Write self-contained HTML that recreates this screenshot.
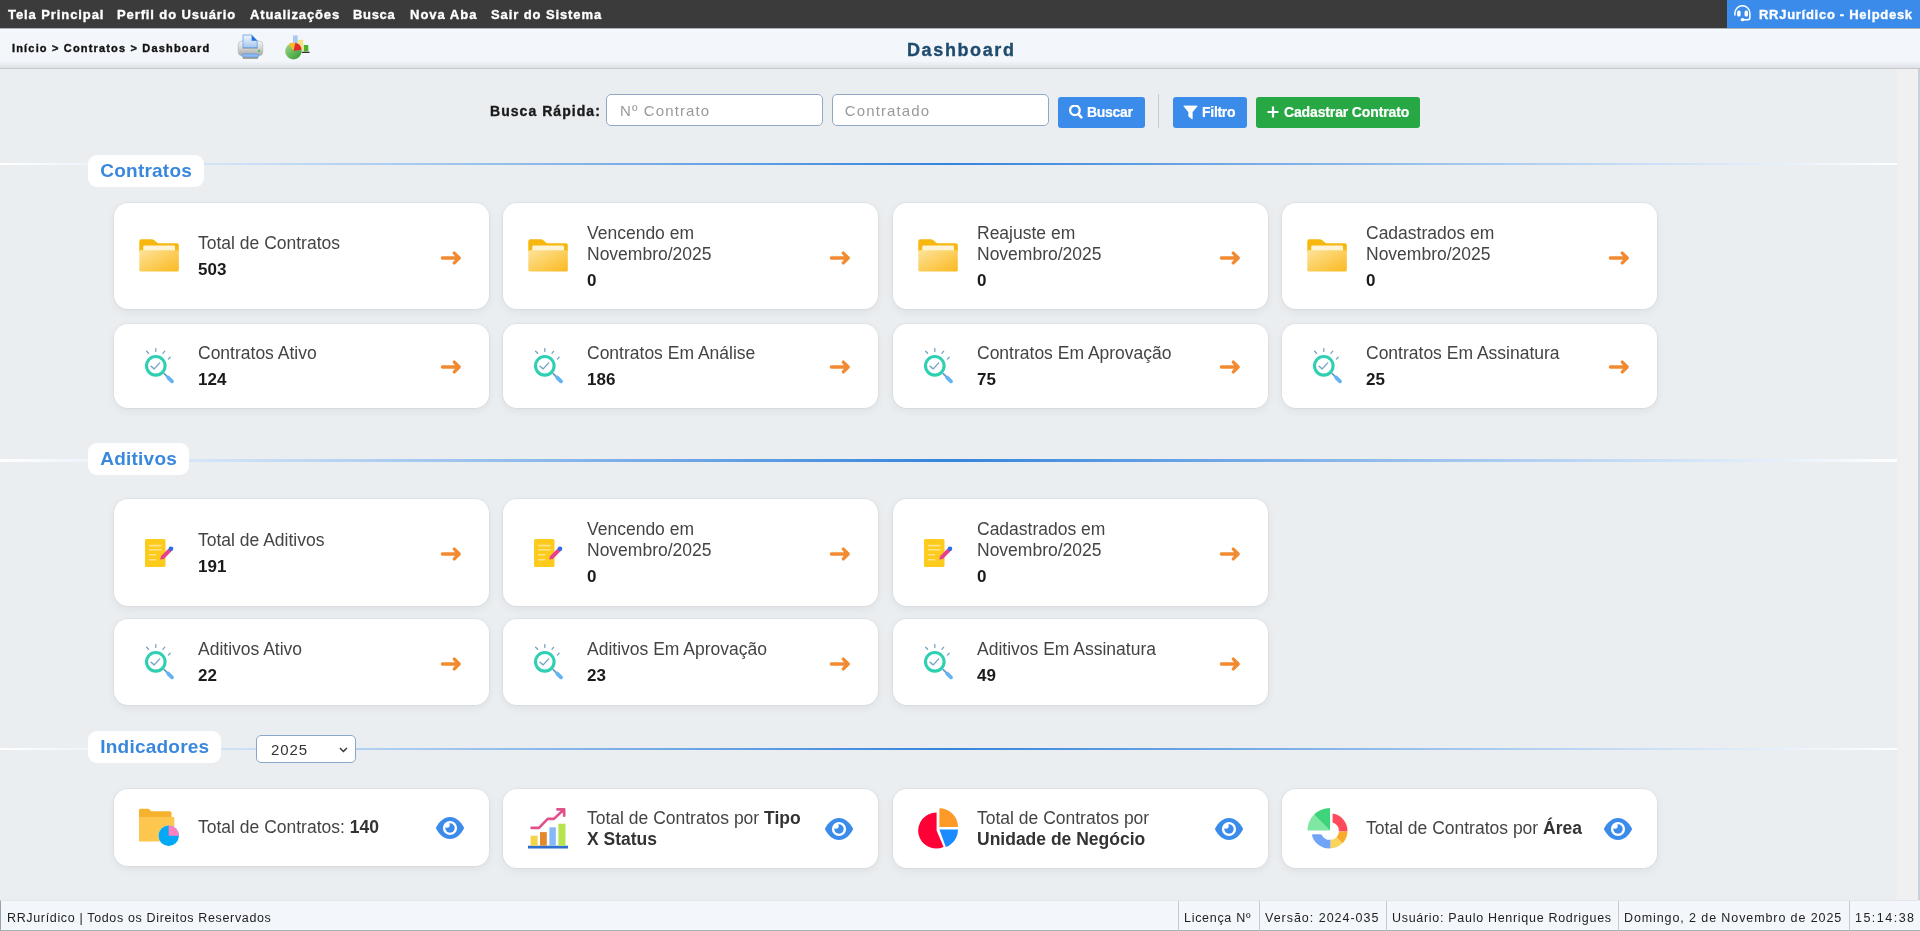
<!DOCTYPE html>
<html lang="pt-BR">
<head>
<meta charset="utf-8">
<title>Dashboard</title>
<style>
*{box-sizing:border-box;margin:0;padding:0}
html,body{width:1920px;height:931px;overflow:hidden}
body{-webkit-font-smoothing:antialiased;position:relative;background:#ebeef1;font-family:"Liberation Sans",sans-serif;color:#333}
.abs{position:absolute;white-space:nowrap}
#top .m,#help .t,#crumb .bc,#crumb .ttl,.lbl,.inp,.btn .bt,.sec,.card .tx,.card .tx2,.sel span,#foot .f{will-change:transform}
.vb{-webkit-text-stroke:.35px currentColor}
/* top bar */
#top{position:absolute;left:0;top:0;width:1920px;height:28px;background:#3b3b3b}
#top .m{position:absolute;top:7px;font-weight:bold;font-size:13px;line-height:15px;color:#fff;letter-spacing:.72px}
#help{position:absolute;left:1727px;top:0;width:193px;height:28px;background:#3a8bea}
#help .t{position:absolute;left:32px;top:7px;font-weight:bold;font-size:13px;line-height:15px;color:#fff;letter-spacing:.72px}
/* breadcrumb bar */
#crumb{position:absolute;left:0;top:28px;width:1920px;height:41px;background:linear-gradient(#a9b3bd 0,#a9b3bd 1px,#fbfcfe 1px,#f3f6fa 3px,#f3f6fa 33px,#dfe2e6 39.5px,#c5c9ce 40px,#c5c9ce 41px)}
#crumb .bc{position:absolute;left:11.8px;top:14px;font-weight:bold;font-size:11px;line-height:13px;color:#111;letter-spacing:1.17px}
#crumb .ttl{position:absolute;left:907.3px;top:12px;font-weight:bold;font-size:18px;line-height:20px;color:#1f4b6e;letter-spacing:1.62px}
/* scrollbar strip */
#sb{position:absolute;left:1897px;top:69px;width:21px;height:832px;background:#f0f0f0}
#sbb{position:absolute;left:1918px;top:69px;width:2px;height:862px;background:#c8d0d8}
/* search */
.lbl{position:absolute;left:490.3px;top:103px;font-weight:bold;font-size:14px;line-height:16px;color:#1a1a1a;letter-spacing:1.05px}
.inp{position:absolute;top:94px;height:32px;background:#fff;border:1px solid #8fa9c6;border-radius:5px;font-size:15px;color:#9a9a9a;padding:8px 0 0 13px;line-height:16px;letter-spacing:1.12px}
.btn{position:absolute;top:97px;height:31px;border-radius:3px;color:#fff;font-weight:bold;font-size:14px;line-height:16px}
.btn .bt{position:absolute;top:7px;letter-spacing:-.28px;-webkit-text-stroke:.2px currentColor}
.sep{position:absolute;left:1158px;top:94px;width:1px;height:34px;background:#c8ccd0}
/* sections */
.hline{position:absolute;left:0;width:1897px;height:2px;background:linear-gradient(90deg,#fff 0%,#3584dc 50%,#fff 100%)}
.sec{position:absolute;left:88px;height:32px;background:#fff;border-radius:9px;color:#3a88dd;font-weight:bold;font-size:19px;line-height:22px;padding:5px 0 0 12.3px;letter-spacing:.22px}
/* cards */
.card{position:absolute;width:375px;background:#fff;border-radius:14px;box-shadow:0 0 0 1px rgba(0,0,0,.035),0 3px 10px rgba(0,0,0,.06)}
.card .ic{position:absolute}
.card .tx{position:absolute;left:83.5px;font-size:17.5px;line-height:21px;color:#444;white-space:nowrap}
.card .tx b{display:block;margin-top:5px;color:#1b1b1b;font-size:17px}
.card .ar{position:absolute}
.card .tx2{position:absolute;left:84px;font-size:17.5px;line-height:21px;color:#444;white-space:nowrap}
.card .tx2 b{color:#333}
.card .ey{position:absolute}
.sel{position:absolute;left:256px;top:735px;width:100px;height:28px;background:#fff;border:1px solid #89a7c8;border-radius:5px;font-size:15px;color:#333}
.sel span{position:absolute;left:14px;top:6px;line-height:16px;letter-spacing:.9px}
/* footer */
#foot{position:absolute;left:0;top:900px;width:1920px;height:31px;background:#f3f6fa;border-top:1px solid #e2e6ea;border-left:1px solid #9aa3ab;border-bottom:1px solid #a8b0b8}
#foot .f{position:absolute;top:9.5px;font-size:12.5px;line-height:14px;color:#222;letter-spacing:.6px}
#foot .s{position:absolute;top:0;width:1px;height:30px;background:#c6cbd0}
</style>
</head>
<body>
<svg width="0" height="0" style="position:absolute">
<defs>
 <linearGradient id="gF" x1="0" y1="0" x2="1" y2="1">
  <stop offset="0" stop-color="#fde39a"/><stop offset="1" stop-color="#fbb91f"/>
 </linearGradient>
 <symbol id="folder" viewBox="0 0 40 40">
  <path d="M0.3,5.2 Q0.3,3.2 2.3,3.2 H12.8 Q14,3.2 15,4 L18,6.6 Q18.6,7.2 19.6,7.2 H38 Q39.8,7.2 39.8,9 V16 H0.3 Z" fill="#f6b70e"/>
  <rect x="4.2" y="9.6" width="31.8" height="6" rx="1.2" fill="#fff3d6"/>
  <path d="M0.3,14.2 H39.8 V34 Q39.8,35.5 38.3,35.5 H1.8 Q0.3,35.5 0.3,34 Z" fill="url(#gF)"/>
 </symbol>
 <symbol id="srch" viewBox="0 0 40 40">
  <g fill="none" stroke-linecap="round">
   <circle cx="16.8" cy="19.8" r="9.3" stroke="#2fd0b2" stroke-width="3.1"/>
   <path d="M12,20.2 L15.2,22.9 L20.7,16.9" stroke="#76a2c6" stroke-width="1.4" stroke-linejoin="round"/>
   <path d="M25.2,27.7 L28.6,31" stroke="#6f9cc4" stroke-width="1.8"/>
   <path d="M29.2,31.6 L33,35.3" stroke="#63b2f6" stroke-width="3.8"/>
   <path d="M7.6,5.2 L9.6,7.3 M16.8,2.6 V5.4 M25.7,5.2 L23.9,7.3 M31.2,11.3 L29.4,13.1" stroke="#76a2c6" stroke-width="1.3"/>
  </g>
 </symbol>
 <symbol id="doc" viewBox="0 0 40 40">
  <rect x="6" y="6" width="20.5" height="28" rx="1.6" fill="#fccb1b"/>
  <path d="M10.6,12.6 H22 M10.6,16.8 H22 M10.6,21.8 H16.6 M10.6,26.8 H16.6" stroke="#fde38c" stroke-width="1.6" stroke-linecap="round"/>
  <path d="M21.2,26.4 L22.1,23.1 L30.4,14.8 L33.2,17.6 L24.9,25.9 Z" fill="#e8418b"/>
  <circle cx="32" cy="15.8" r="2.3" fill="#2c6ce8"/>
 </symbol>
 <symbol id="arr" viewBox="0 0 24 16">
  <path d="M3.4,8 H20.2 M15.3,3.1 L20.2,8 L15.3,12.9" fill="none" stroke="#f28a31" stroke-width="3.3" stroke-linecap="round" stroke-linejoin="round"/>
 </symbol>
 <symbol id="eye" viewBox="0 0 30 24">
  <clipPath id="cpP"><circle cx="15" cy="12" r="6.4"/></clipPath>
  <path d="M0.8,12 C4.5,5 9,1 15,1 C21,1 25.5,5 29.2,12 C25.5,19 21,23 15,23 C9,23 4.5,19 0.8,12 Z" fill="#3b8beb"/>
  <circle cx="15" cy="12" r="7.1" fill="#fff"/>
  <circle cx="15" cy="12" r="4.7" fill="#3b8beb"/>
  <circle cx="12" cy="9" r="2.7" fill="#fff" clip-path="url(#cpP)"/>
 </symbol>
 <symbol id="ifold" viewBox="0 0 40 40">
  <path d="M0,2.2 Q0,0.7 1.5,0.7 H9.7 L12.2,3.2 H31 Q32.5,3.2 32.5,4.7 V12 H0 Z" fill="#f6b22c"/>
  <path d="M0,9 H35.3 V33.4 H0 Z" fill="#fdc74f"/>
  <circle cx="29.7" cy="27.8" r="10.2" fill="#fff"/>
  <circle cx="29.7" cy="27.8" r="10.2" fill="#03a9f4"/>
  <path d="M29.7,27.8 V17.6 A10.2,10.2 0 0 1 39.9,27.8 Z" fill="#ff80c0"/>
 </symbol>
 <symbol id="ichart" viewBox="0 0 40 42">
  <rect x="0" y="37.7" width="40" height="2.8" fill="#2f6fd0"/>
  <rect x="2.6" y="27.7" width="7.1" height="10" fill="#f3d44a"/>
  <rect x="12" y="24.1" width="6.8" height="13.6" fill="#e38a2c"/>
  <rect x="21.4" y="19.3" width="6.4" height="18.4" fill="#86b8f8"/>
  <rect x="30.4" y="15.7" width="7.1" height="22" fill="#b6e44e"/>
  <path d="M3.6,19.9 H11 L19.7,10.9 H25.9 L35.6,1.8 M29.4,1.4 H36.2 V7.7" fill="none" stroke="#e2508c" stroke-width="2.6" stroke-linecap="round" stroke-linejoin="round"/>
 </symbol>
 <symbol id="ipie" viewBox="0 0 40 42">
  <path d="M18.6,22.6 V4.6 A18,18 0 1 0 25.6,39 Z" fill="#ff0036"/>
  <path d="M21.4,18.9 V0.3 A18.6,18.6 0 0 1 40,18.9 Z" fill="#ff9a28"/>
  <path d="M21.4,21.5 H40 A18.6,18.6 0 0 1 27.8,39 Z" fill="#1a8cff"/>
 </symbol>
 <symbol id="idonut" viewBox="0 0 46 42">
  <path d="M23,22.5 H0.5 A22.5,22.5 0 0 1 7.1,6.6 Z" fill="#7ee8a2"/>
  <path d="M23,22.5 L7.1,6.6 A22.5,22.5 0 0 1 23,0 Z" fill="#3dd47a"/>
  <path d="M25.6,5.6 A17.3,17.3 0 0 1 40.5,23.4 H32 A8.5,8.5 0 0 0 25.6,14.6 Z" fill="#ff4a5c"/>
  <path d="M40.5,23.4 A17.3,17.3 0 0 1 35.4,35.2 L29.4,29.2 A8.5,8.5 0 0 0 32,23.4 Z" fill="#f9ac2b"/>
  <path d="M35.4,35.2 A17.3,17.3 0 0 1 23.4,40.3 V31.8 A8.5,8.5 0 0 0 29.4,29.2 Z" fill="#fad45b"/>
  <path d="M23.4,40.3 A17.3,17.3 0 0 1 5,27.6 Q4.8,26.2 6.4,26.2 H13 Q14.4,26.2 15.2,27.4 A8.5,8.5 0 0 0 23.4,31.8 Z" fill="#71a4f7"/>
 </symbol>
</defs>
</svg>
<div id="top">
  <span class="m vb" style="left:8px;letter-spacing:.91px">Tela Principal</span>
  <span class="m vb" style="left:117.3px;letter-spacing:.89px">Perfil do Usuário</span>
  <span class="m vb" style="left:250px;letter-spacing:.88px">Atualizações</span>
  <span class="m vb" style="left:353.2px;letter-spacing:.67px">Busca</span>
  <span class="m vb" style="left:409.8px;letter-spacing:.99px">Nova Aba</span>
  <span class="m vb" style="left:491.2px;letter-spacing:.9px">Sair do Sistema</span>
</div>
<div id="help">
  <svg style="position:absolute;left:6px;top:4px" width="24" height="20" viewBox="0 0 24 20">
   <path d="M1.9,11 V9.3 A7.5,7.5 0 0 1 16.9,9.3 V13.6 Q16.9,15.7 14.8,15.7 H10.6" fill="none" stroke="#fff" stroke-width="1.5" stroke-linecap="round"/>
   <rect x="4.1" y="6.6" width="3.5" height="6" rx="1.5" fill="#fff"/>
   <rect x="11.5" y="6.6" width="3.5" height="6" rx="1.5" fill="#fff"/>
   <ellipse cx="9.6" cy="15.7" rx="2" ry="1.6" fill="#fff"/>
  </svg>
  <span class="t vb">RRJurídico - Helpdesk</span>
</div>
<div id="crumb">
  <span class="bc vb">Início &gt; Contratos &gt; Dashboard</span>
  <span class="ttl vb">Dashboard</span>
  <svg style="position:absolute;left:237px;top:6px" width="27" height="26" viewBox="0 0 27 26">
   <defs>
    <linearGradient id="gPr" x1="0" y1="0" x2="0" y2="1"><stop offset="0" stop-color="#f6f6f6"/><stop offset=".5" stop-color="#d2d2d2"/><stop offset="1" stop-color="#a8a8a8"/></linearGradient>
    <linearGradient id="gPp" x1="0" y1="0" x2="0" y2="1"><stop offset="0" stop-color="#f2f7fd"/><stop offset="1" stop-color="#a6c7ee"/></linearGradient>
   </defs>
   <rect x="1.2" y="7" width="24.6" height="14.8" rx="3.8" fill="url(#gPr)" stroke="#b4b4b4" stroke-width=".6"/>
   <rect x="5.6" y="13.6" width="15.2" height="1" fill="#9a9a9a"/>
   <path d="M6,1 H14.6 L20.2,6.8 V13.6 H6 Z" fill="url(#gPp)" stroke="#5d9ce6" stroke-width=".8"/>
   <path d="M14.6,1 L20.2,6.8 H14.6 Z" fill="#1f6fd8"/>
   <rect x="5.2" y="19.9" width="16.4" height="3.3" rx="1" fill="#8cbcf4" stroke="#4c8fe0" stroke-width=".6"/>
   <rect x="5.6" y="23.2" width="15.6" height="1.6" rx=".8" fill="#8a8a8a"/>
   <circle cx="22.1" cy="16.9" r="1.1" fill="#3fc43f"/>
  </svg>
  <svg style="position:absolute;left:284px;top:7px" width="27" height="26" viewBox="0 0 27 26">
   <defs>
    <linearGradient id="gPg" x1="0" y1="0" x2="1" y2="1"><stop offset="0" stop-color="#a8d890"/><stop offset="1" stop-color="#2a9a2a"/></linearGradient>
   </defs>
   <rect x="9" y="0.4" width="4.7" height="8.6" fill="#a9c8f4"/>
   <rect x="14.2" y="4.8" width="4.9" height="11.2" fill="#f4e27a"/>
   <rect x="19.8" y="10" width="4.5" height="6.5" fill="#4fb02a"/>
   <rect x="17.7" y="16.8" width="8" height="1.2" rx=".6" fill="#333"/>
   <circle cx="9.4" cy="16.2" r="8.2" fill="url(#gPg)"/>
   <path d="M9.6,16 L4.6,9.2 A8.2,8.2 0 0 1 11.4,7.8 Z" fill="#f9b92a"/>
   <path d="M9.6,16 L11.4,7.8 A8.2,8.2 0 0 1 17.6,14.6 Z" fill="#e32b2b"/>
  </svg>
</div>
<div id="sb"></div><div id="sbb"></div>

<!-- SEARCH -->
<span class="lbl vb">Busca Rápida:</span>
<div class="inp" style="left:606px;width:217px">Nº Contrato</div>
<div class="inp" style="left:832px;width:217px;padding-left:11.8px">Contratado</div>
<div class="btn" style="left:1058px;width:87px;background:#3b8beb"><svg style="position:absolute;left:11px;top:8px" width="15" height="15" viewBox="0 0 15 15"><circle cx="5.9" cy="5.3" r="4.8" fill="none" stroke="#fff" stroke-width="2.3"/><path d="M9.4,9.2 L12.4,12.3" stroke="#fff" stroke-width="2.6" stroke-linecap="round"/></svg><span class="bt" style="left:29px">Buscar</span></div>
<div class="sep"></div>
<div class="btn" style="left:1173px;width:74px;background:#3b8beb"><svg style="position:absolute;left:10px;top:8px" width="15" height="15" viewBox="0 0 15 15"><path d="M0.8,1 H14.2 L9.2,7.2 V14 L5.8,11.4 V7.2 Z" fill="#fff" stroke="#fff" stroke-width=".8" stroke-linejoin="round"/></svg><span class="bt" style="left:29px">Filtro</span></div>
<div class="btn" style="left:1256px;width:164px;background:#28a745"><svg style="position:absolute;left:11px;top:9px" width="12" height="12" viewBox="0 0 12 12"><path d="M6,0.5 V11.5 M0.5,6 H11.5" stroke="#fff" stroke-width="2.2"/></svg><span class="bt" style="left:27.5px;letter-spacing:-.14px">Cadastrar Contrato</span></div>

<!-- SECTIONS -->
<div class="hline" style="top:163px"></div>
<div class="sec" style="top:155px;width:116px">Contratos</div>
<div class="hline" style="top:459px;height:3px"></div>
<div class="sec" style="top:443px;width:101px">Aditivos</div>
<div class="hline" style="top:748px"></div>
<div class="sec" style="top:731px;width:133px">Indicadores</div>

<!-- CARDS -->
<div class="card" style="left:114px;top:203.4px;height:105.6px"><svg class="ic" style="left:25px;top:32.80px" width="40" height="40"><use href="#folder"/></svg><div class="tx" style="top:29.30px">Total de Contratos<b>503</b></div><svg class="ar" style="left:325px;top:46.40px" width="24" height="16"><use href="#arr"/></svg></div>
<div class="card" style="left:503px;top:203.4px;height:105.6px"><svg class="ic" style="left:25px;top:32.80px" width="40" height="40"><use href="#folder"/></svg><div class="tx" style="top:19.40px">Vencendo em<br>Novembro/2025<b>0</b></div><svg class="ar" style="left:325px;top:46.40px" width="24" height="16"><use href="#arr"/></svg></div>
<div class="card" style="left:893px;top:203.4px;height:105.6px"><svg class="ic" style="left:25px;top:32.80px" width="40" height="40"><use href="#folder"/></svg><div class="tx" style="top:19.40px">Reajuste em<br>Novembro/2025<b>0</b></div><svg class="ar" style="left:325px;top:46.40px" width="24" height="16"><use href="#arr"/></svg></div>
<div class="card" style="left:1282.2px;top:203.4px;height:105.6px"><svg class="ic" style="left:25px;top:32.80px" width="40" height="40"><use href="#folder"/></svg><div class="tx" style="top:19.40px">Cadastrados em<br>Novembro/2025<b>0</b></div><svg class="ar" style="left:325px;top:46.40px" width="24" height="16"><use href="#arr"/></svg></div>
<div class="card" style="left:114px;top:323.6px;height:84.6px"><svg class="ic" style="left:25px;top:22.30px" width="40" height="40"><use href="#srch"/></svg><div class="tx" style="top:19.60px">Contratos Ativo<b>124</b></div><svg class="ar" style="left:325px;top:35.90px" width="24" height="16"><use href="#arr"/></svg></div>
<div class="card" style="left:503px;top:323.6px;height:84.6px"><svg class="ic" style="left:25px;top:22.30px" width="40" height="40"><use href="#srch"/></svg><div class="tx" style="top:19.60px">Contratos Em Análise<b>186</b></div><svg class="ar" style="left:325px;top:35.90px" width="24" height="16"><use href="#arr"/></svg></div>
<div class="card" style="left:893px;top:323.6px;height:84.6px"><svg class="ic" style="left:25px;top:22.30px" width="40" height="40"><use href="#srch"/></svg><div class="tx" style="top:19.60px">Contratos Em Aprovação<b>75</b></div><svg class="ar" style="left:325px;top:35.90px" width="24" height="16"><use href="#arr"/></svg></div>
<div class="card" style="left:1282.2px;top:323.6px;height:84.6px"><svg class="ic" style="left:25px;top:22.30px" width="40" height="40"><use href="#srch"/></svg><div class="tx" style="top:19.60px">Contratos Em Assinatura<b>25</b></div><svg class="ar" style="left:325px;top:35.90px" width="24" height="16"><use href="#arr"/></svg></div>
<div class="card" style="left:114px;top:499.4px;height:106.7px"><svg class="ic" style="left:25px;top:33.35px" width="40" height="40"><use href="#doc"/></svg><div class="tx" style="top:30.55px">Total de Aditivos<b>191</b></div><svg class="ar" style="left:325px;top:46.95px" width="24" height="16"><use href="#arr"/></svg></div>
<div class="card" style="left:503px;top:499.4px;height:106.7px"><svg class="ic" style="left:25px;top:33.35px" width="40" height="40"><use href="#doc"/></svg><div class="tx" style="top:20.05px">Vencendo em<br>Novembro/2025<b>0</b></div><svg class="ar" style="left:325px;top:46.95px" width="24" height="16"><use href="#arr"/></svg></div>
<div class="card" style="left:893px;top:499.4px;height:106.7px"><svg class="ic" style="left:25px;top:33.35px" width="40" height="40"><use href="#doc"/></svg><div class="tx" style="top:20.05px">Cadastrados em<br>Novembro/2025<b>0</b></div><svg class="ar" style="left:325px;top:46.95px" width="24" height="16"><use href="#arr"/></svg></div>
<div class="card" style="left:114px;top:619.4px;height:85.6px"><svg class="ic" style="left:25px;top:22.80px" width="40" height="40"><use href="#srch"/></svg><div class="tx" style="top:19.30px">Aditivos Ativo<b>22</b></div><svg class="ar" style="left:325px;top:36.40px" width="24" height="16"><use href="#arr"/></svg></div>
<div class="card" style="left:503px;top:619.4px;height:85.6px"><svg class="ic" style="left:25px;top:22.80px" width="40" height="40"><use href="#srch"/></svg><div class="tx" style="top:19.30px">Aditivos Em Aprovação<b>23</b></div><svg class="ar" style="left:325px;top:36.40px" width="24" height="16"><use href="#arr"/></svg></div>
<div class="card" style="left:893px;top:619.4px;height:85.6px"><svg class="ic" style="left:25px;top:22.80px" width="40" height="40"><use href="#srch"/></svg><div class="tx" style="top:19.30px">Aditivos Em Assinatura<b>49</b></div><svg class="ar" style="left:325px;top:36.40px" width="24" height="16"><use href="#arr"/></svg></div>

<!-- INDICATORS -->
<div class="sel"><span>2025</span><svg width="10" height="7" style="position:absolute;left:82px;top:10.5px"><path d="M0.9,0.9 L4.4,4.5 L7.9,0.9" fill="none" stroke="#333" stroke-width="1.4"/></svg></div>
<div class="card" style="left:114px;top:789px;height:77px">
 <svg class="ic" style="left:25px;top:18.5px" width="40" height="40"><use href="#ifold"/></svg>
 <div class="tx2" style="top:27.5px">Total de Contratos: <b>140</b></div>
 <svg class="ey" style="left:321px;top:27px" width="30" height="24"><use href="#eye"/></svg>
</div>
<div class="card" style="left:503px;top:789px;height:79px">
 <svg class="ic" style="left:25px;top:18.5px" width="40" height="42"><use href="#ichart"/></svg>
 <div class="tx2" style="top:18.5px">Total de Contratos por <b>Tipo</b><br><b>X Status</b></div>
 <svg class="ey" style="left:321px;top:28px" width="30" height="24"><use href="#eye"/></svg>
</div>
<div class="card" style="left:893px;top:789px;height:79px">
 <svg class="ic" style="left:25px;top:18.5px" width="40" height="42"><use href="#ipie"/></svg>
 <div class="tx2" style="top:18.5px">Total de Contratos por<br><b>Unidade de Negócio</b></div>
 <svg class="ey" style="left:321px;top:28px" width="30" height="24"><use href="#eye"/></svg>
</div>
<div class="card" style="left:1282px;top:789px;height:79px">
 <svg class="ic" style="left:25px;top:18.5px" width="46" height="42"><use href="#idonut"/></svg>
 <div class="tx2" style="top:29px">Total de Contratos por <b>Área</b></div>
 <svg class="ey" style="left:321px;top:28px" width="30" height="24"><use href="#eye"/></svg>
</div>

<!-- FOOTER -->
<div id="foot">
  <span class="f" style="left:5.8px;letter-spacing:.65px">RRJurídico | Todos os Direitos Reservados</span>
  <span class="s" style="left:1177px"></span>
  <span class="f" style="left:1183.3px;letter-spacing:.7px">Licença Nº</span>
  <span class="s" style="left:1258px"></span>
  <span class="f" style="left:1264.4px;letter-spacing:.98px">Versão: 2024-035</span>
  <span class="s" style="left:1385px"></span>
  <span class="f" style="left:1390.6px;letter-spacing:.7px">Usuário: Paulo Henrique Rodrigues</span>
  <span class="s" style="left:1617px"></span>
  <span class="f" style="left:1623.2px;letter-spacing:.9px">Domingo, 2 de Novembro de 2025</span>
  <span class="s" style="left:1848px"></span>
  <span class="f" style="left:1854.3px;letter-spacing:1.48px">15:14:38</span>
</div>
</body>
</html>
